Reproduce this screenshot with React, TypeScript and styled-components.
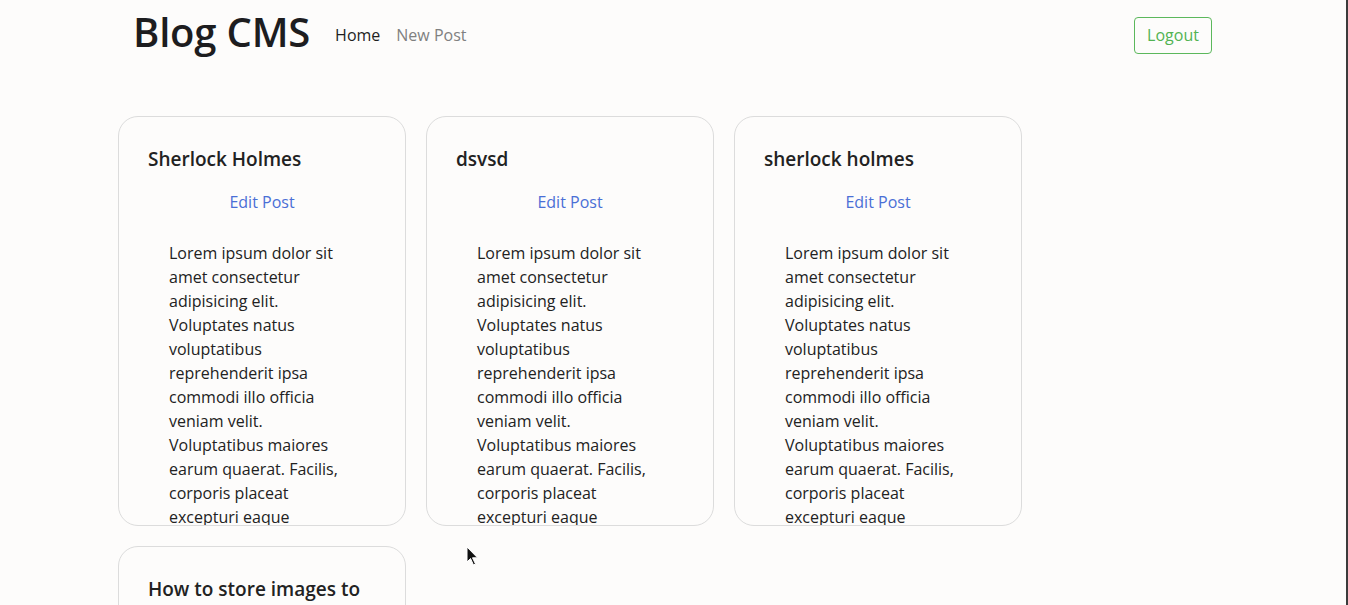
import React from "react";
import styled, { createGlobalStyle } from "styled-components";

const Global = createGlobalStyle`
  html, body { margin: 0; padding: 0; background: #fdfcfb; }
  body { font-family: "Open Sans", "Noto Sans", sans-serif; color: #212529; overflow: hidden; }
  * { box-sizing: border-box; }
`;

const Page = styled.div`
  position: relative;
  width: 1348px;
  height: 605px;
  overflow: hidden;
  border-right: 2px solid #3b3b3b;
`;

const NavBar = styled.nav`
  display: flex;
  align-items: center;
  height: 70px;
  padding: 0 134px 0 133px;
`;

const Brand = styled.div`
  font-size: 40px;
  line-height: 48px;
  font-weight: 600;
  color: #1d1d1f;
  letter-spacing: -0.2px;
  margin: -6px 25px 0 0;
`;

const NavLink = styled.a<{ $active?: boolean }>`
  font-size: 16px;
  color: ${(p) => (p.$active ? "#1f1f1f" : "#808080")};
  text-decoration: none;
  margin-right: 16px;
`;

const Spacer = styled.div`
  flex: 1;
`;

const OutlineButton = styled.button`
  font-family: inherit;
  font-size: 16px;
  color: #52b352;
  background: transparent;
  border: 1px solid #5cb85c;
  border-radius: 4px;
  width: 78px;
  height: 37px;
  padding: 0;
`;

const Grid = styled.div`
  display: grid;
  grid-template-columns: repeat(3, 288px);
  gap: 20px 20px;
  padding: 46px 0 0 118px;
`;

const Card = styled.div`
  height: 410px;
  border: 1px solid #dcdcdc;
  border-radius: 20px;
  padding: 30px 29px 0 29px;
  overflow: hidden;
  display: flex;
  flex-direction: column;
`;

const Title = styled.h2`
  margin: 0;
  font-size: 19px;
  font-weight: 600;
  line-height: 24px;
  color: #222;
`;

const EditLink = styled.a`
  align-self: center;
  margin-top: 19px;
  font-size: 16px;
  line-height: 24px;
  color: #4a6fd6;
  text-decoration: none;
`;

const Body = styled.p`
  margin: 27px 0 0 0;
  padding: 0 20px 0 21px;
  font-size: 16px;
  line-height: 24px;
  color: #222;
`;

const Cursor = styled.svg`
  position: absolute;
  left: 466px;
  top: 546px;
`;

const lorem =
  "Lorem ipsum dolor sit amet consectetur adipisicing elit. Voluptates natus voluptatibus reprehenderit ipsa commodi illo officia veniam velit. Voluptatibus maiores earum quaerat. Facilis, corporis placeat excepturi eaque";

const posts = ["Sherlock Holmes", "dsvsd", "sherlock holmes", "How to store images to mongo db using node js"];

export default function App() {
  return (
    <Page>
      <Global />
      <NavBar>
        <Brand>Blog CMS</Brand>
        <NavLink $active href="#">Home</NavLink>
        <NavLink href="#">New Post</NavLink>
        <Spacer />
        <OutlineButton>Logout</OutlineButton>
      </NavBar>
      <Grid>
        {posts.map((t, i) => (
          <Card key={i}>
            <Title>{t}</Title>
            <EditLink href="#">Edit Post</EditLink>
            <Body>{lorem}</Body>
          </Card>
        ))}
      </Grid>
      <Cursor width="14" height="22" viewBox="0 0 14 22">
        <path d="M1 1 L1 16 L4.5 12.5 L7.5 19 L9.5 18 L6.5 11.8 L11.5 11.8 Z" fill="#111" stroke="#fff" strokeWidth="1" />
      </Cursor>
    </Page>
  );
}
